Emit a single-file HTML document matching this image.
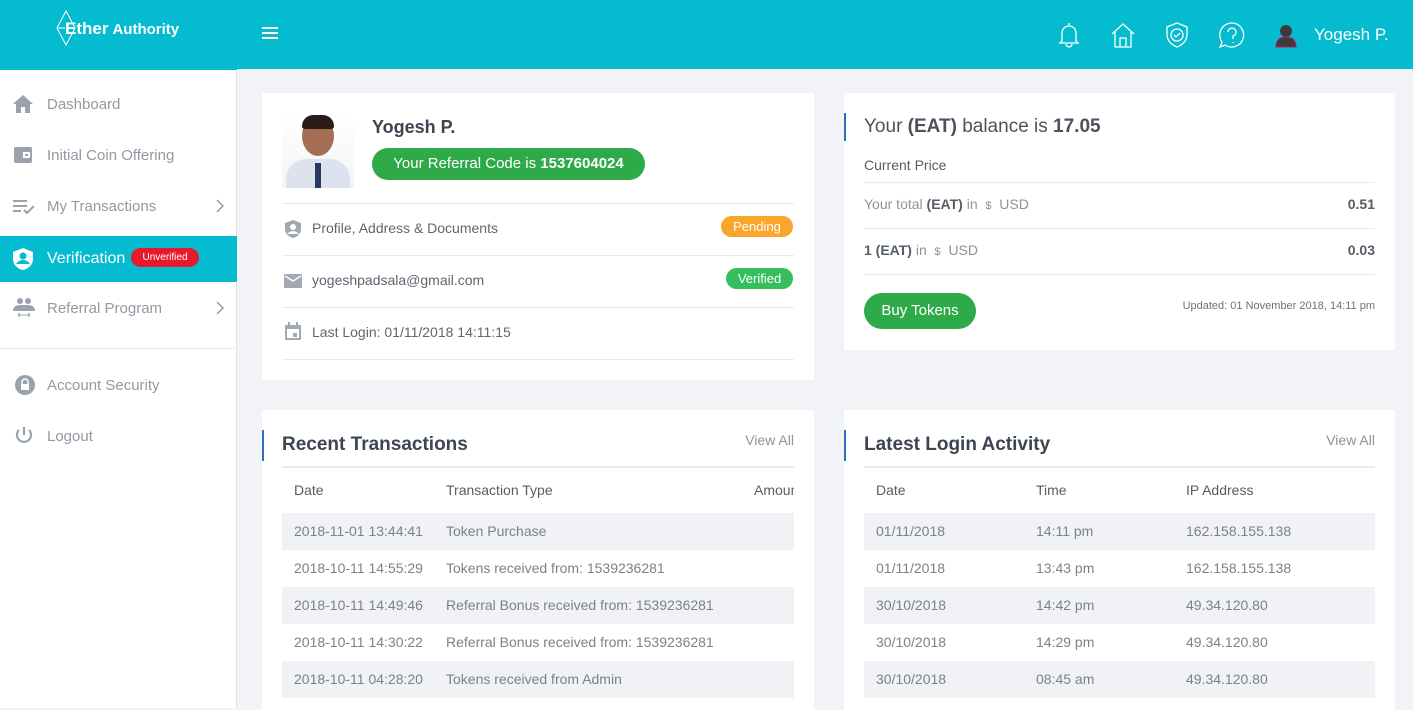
<!DOCTYPE html>
<html><head><meta charset="utf-8"><style>
*{box-sizing:border-box;margin:0;padding:0}
body{width:1413px;height:708px;overflow:hidden;background:#f1f3f7;font-family:"Liberation Sans",sans-serif;position:relative;color:#5f6670}
.abs{position:absolute}
.side{left:0;top:0;width:237px;height:708px;background:#fff;border-right:1px solid #e2e4e8}
.logo{left:0;top:0;width:237px;height:70px;background:#05bbd0}
.hdr{left:237px;top:0;right:0;height:69px;background:#05bbd0}
.nav{position:absolute;left:0;width:237px;height:46px;display:flex;align-items:center;font-size:15px;color:#9299a2}
.nav svg{position:absolute;left:12px}
.nav span{position:absolute;left:47px}
.nav svg.chev{left:216px}
.card{background:#fff;position:absolute}
.row{position:absolute;left:20px;right:20px;border-bottom:1px solid #e8eaee}
.t{position:absolute;white-space:nowrap}
.stripe{position:absolute;background:#f0f2f5;height:37px}
</style></head><body>
<div class="abs side"></div>
<div class="abs logo">
 <svg class="abs" style="left:55px;top:10px" width="22" height="36" viewBox="0 0 22 36"><path d="M11 1 L20 18 L11 35 L2 18 Z" fill="none" stroke="#fff" stroke-width="1"/><path d="M3 18 H10" stroke="#fff"/></svg>
 <div class="t" style="left:65px;top:19px;color:#fff;font-size:17px;font-weight:bold">Ether<span style="font-size:15px;margin-left:4px">Authority</span></div>
</div>
<div class="abs hdr">
 <div class="abs" style="left:25px;top:27px;width:16px;height:2px;background:#fff;box-shadow:0 5px 0 #fff,0 10px 0 #fff"></div>
 <svg class="abs" style="left:820px;top:21px" width="24" height="28" viewBox="0 0 24 28" fill="none" stroke="#fff" stroke-width="1.3"><path d="M12 2v2M5 20V12a7 7 0 0 1 14 0v8l2 2H3z M9 23a3 3 0 0 0 6 0"/></svg>
 <svg class="abs" style="left:873px;top:21px" width="26" height="28" viewBox="0 0 26 28" fill="none" stroke="#fff" stroke-width="1.3"><path d="M2 13 L13 3 L24 13 M5 11v15h16V11 M10 26v-9h6v9"/></svg>
 <svg class="abs" style="left:928px;top:21px" width="24" height="28" viewBox="0 0 24 28" fill="none" stroke="#fff" stroke-width="1.3"><path d="M12 2 L22 6 V13 C22 20 17 24 12 26 C7 24 2 20 2 13 V6 Z"/><circle cx="12" cy="14" r="6"/><path d="M9 14l2 2 4-4"/></svg>
 <svg class="abs" style="left:981px;top:21px" width="28" height="28" viewBox="0 0 28 28" fill="none" stroke="#fff" stroke-width="1.3"><path d="M14 2a12 12 0 1 1-7 22l-5 2 2-5A12 12 0 0 1 14 2z"/><path d="M10 11a4 4 0 1 1 5 4v3M15 21v1"/></svg>
 <svg class="abs" style="left:1038px;top:24px" width="22" height="24" viewBox="0 0 22 24"><circle cx="11" cy="7" r="6" fill="#3b3b3b"/><path d="M1 23c0-7 4-10 10-10s10 3 10 10z" fill="#3b3b3b" stroke="#c2185b" stroke-width="1"/></svg>
 <div class="t" style="left:1077px;top:25px;color:#fff;font-size:17px">Yogesh P.</div>
</div>

<div class="nav" style="top:81px"><svg width="22" height="20" viewBox="0 0 22 20"><path d="M11 1L1 10h3v9h5v-6h4v6h5v-9h3z" fill="#9aa3ad"/></svg><span>Dashboard</span></div>
<div class="nav" style="top:132px"><svg width="22" height="20" viewBox="0 0 22 20"><rect x="2" y="2" width="18" height="16" rx="2" fill="#9aa3ad"/><rect x="11" y="7" width="7" height="6" fill="#fff"/><rect x="13" y="9" width="3" height="2" fill="#9aa3ad"/></svg><span>Initial Coin Offering</span></div>
<div class="nav" style="top:183px"><svg width="24" height="20" viewBox="0 0 24 20" fill="none" stroke="#9aa3ad" stroke-width="2"><path d="M1 5h14M1 10h14M1 15h8M12 14l3 3 7-7"/></svg><span>My Transactions</span><svg class="chev" width="8" height="14" viewBox="0 0 8 14"><path d="M1 1l6 6-6 6" stroke="#8a9098" stroke-width="1.3" fill="none"/></svg></div>
<div class="nav" style="top:236px;background:#05bbd0;color:#fff;font-size:16px"><svg width="22" height="24" viewBox="0 0 22 24"><path d="M11 1L21 5v7c0 6-5 10-10 11C6 22 1 18 1 12V5z" fill="#fff"/><circle cx="11" cy="9" r="3.5" fill="#05bbd0"/><path d="M4 17c2-3 4-4 7-4s5 1 7 4" fill="#05bbd0"/></svg><span>Verification</span><div class="abs" style="left:131px;top:12px;width:68px;height:19px;border-radius:10px;background:#e8192c;color:#fff;font-size:10px;text-align:center;line-height:19px">Unverified</div></div>
<div class="nav" style="top:285px"><svg width="24" height="22" viewBox="0 0 24 22" fill="#9aa3ad"><circle cx="8" cy="4" r="3"/><circle cx="16" cy="4" r="3"/><path d="M1 14c0-4 3-6 7-6h8c4 0 7 2 7 6z"/><path d="M6 18h12M6 18l2-2M6 18l2 2M18 18l-2-2M18 18l-2 2" stroke="#9aa3ad" fill="none"/></svg><span>Referral Program</span><svg class="chev" width="8" height="14" viewBox="0 0 8 14"><path d="M1 1l6 6-6 6" stroke="#8a9098" stroke-width="1.3" fill="none"/></svg></div>
<div class="abs" style="left:0;top:348px;width:237px;height:1px;background:#e8eaee"></div>
<div class="nav" style="top:362px"><svg width="24" height="24" viewBox="0 0 24 24"><circle cx="13" cy="12" r="10" fill="#9aa3ad"/><rect x="9" y="11" width="8" height="6" fill="#fff"/><path d="M10 11V9a3 3 0 0 1 6 0v2" stroke="#fff" fill="none" stroke-width="1.5"/></svg><span>Account Security</span></div>
<div class="nav" style="top:413px"><svg width="24" height="24" viewBox="0 0 24 24" fill="none" stroke="#9aa3ad" stroke-width="2.2"><path d="M12 3v8M7 6a7 7 0 1 0 10 0"/></svg><span>Logout</span></div>

<!-- Profile card -->
<div class="card" style="left:262px;top:93px;width:552px;height:287px">
 <div class="abs" style="left:20px;top:20px;width:72px;height:75px;background:linear-gradient(#fff 0,#f4f4f4 100%)">
  <div class="abs" style="left:20px;top:3px;width:32px;height:40px;border-radius:50%;background:#a56f55"></div>
  <div class="abs" style="left:20px;top:2px;width:32px;height:14px;border-radius:16px 16px 4px 4px;background:#2a1d18"></div>
  <div class="abs" style="left:4px;top:46px;width:64px;height:29px;border-radius:20px 20px 0 0;background:#dde3ee"></div>
  <div class="abs" style="left:33px;top:50px;width:6px;height:25px;background:#26395e"></div>
 </div>
 <div class="t" style="left:110px;top:24px;font-size:18px;font-weight:bold;color:#3c4550">Yogesh P.</div>
 <div class="abs" style="left:110px;top:55px;width:273px;height:32px;border-radius:16px;background:#2eaa48;color:#fff;font-size:15px;text-align:center;line-height:32px">Your Referral Code is <b>1537604024</b></div>
 <div class="row" style="top:0;height:111px"></div>
 <div class="row" style="top:111px;height:52px"></div>
 <div class="row" style="top:163px;height:52px"></div>
 <div class="row" style="top:215px;height:52px"></div>
 <svg class="abs" style="left:22px;top:126px" width="18" height="20" viewBox="0 0 18 20"><path d="M9 1l8 3v6c0 5-4 8-8 9-4-1-8-4-8-9V4z" fill="#a1a8b1"/><circle cx="9" cy="8" r="3" fill="#fff"/><path d="M3 15c2-2 4-3 6-3s4 1 6 3" fill="#fff"/></svg>
 <div class="t" style="left:50px;top:127px;font-size:14px">Profile, Address &amp; Documents</div>
 <div class="abs" style="left:459px;top:123px;width:72px;height:21px;border-radius:11px;background:#f9a62a;color:#fff;font-size:13px;text-align:center;line-height:21px">Pending</div>
 <svg class="abs" style="left:22px;top:180px" width="18" height="16" viewBox="0 0 18 16"><rect x="0" y="1" width="18" height="14" rx="1" fill="#a1a8b1"/><path d="M1 3l8 5 8-5" stroke="#fff" stroke-width="1.5" fill="none"/></svg>
 <div class="t" style="left:50px;top:179px;font-size:14px">yogeshpadsala@gmail.com</div>
 <div class="abs" style="left:464px;top:175px;width:67px;height:21px;border-radius:11px;background:#35bf5c;color:#fff;font-size:13px;text-align:center;line-height:21px">Verified</div>
 <svg class="abs" style="left:22px;top:229px" width="18" height="19" viewBox="0 0 18 19"><rect x="1" y="3" width="16" height="15" rx="1" fill="#a1a8b1"/><rect x="3" y="7" width="12" height="9" fill="#fff"/><rect x="9" y="11" width="4" height="4" fill="#a1a8b1"/><rect x="4" y="0" width="2" height="4" fill="#a1a8b1"/><rect x="12" y="0" width="2" height="4" fill="#a1a8b1"/></svg>
 <div class="t" style="left:50px;top:231px;font-size:14px">Last Login: 01/11/2018 14:11:15</div>
</div>

<!-- Balance card -->
<div class="card" style="left:844px;top:93px;width:551px;height:257px">
 <div class="abs" style="left:0;top:20px;width:2px;height:28px;background:#2f6fbe"></div>
 <div class="t" style="left:20px;top:23px;font-size:19px;color:#4a525c">Your <b>(EAT)</b> balance is <b>17.05</b></div>
 <div class="t" style="left:20px;top:64px;font-size:14px;color:#555d66">Current Price</div>
 <div class="abs" style="left:20px;right:20px;top:89px;height:1px;background:#e8eaee"></div>
 <div class="t" style="left:20px;top:103px;font-size:14px;color:#8c939b">Your total <b style="color:#555d66">(EAT)</b> in &nbsp;<span style="font-size:11px">$</span>&nbsp; USD</div>
 <div class="t" style="right:20px;top:103px;font-size:14px;font-weight:bold;color:#555d66">0.51</div>
 <div class="abs" style="left:20px;right:20px;top:135px;height:1px;background:#e8eaee"></div>
 <div class="t" style="left:20px;top:149px;font-size:14px;color:#8c939b"><b style="color:#555d66">1 (EAT)</b> in &nbsp;<span style="font-size:11px">$</span>&nbsp; USD</div>
 <div class="t" style="right:20px;top:149px;font-size:14px;font-weight:bold;color:#555d66">0.03</div>
 <div class="abs" style="left:20px;right:20px;top:181px;height:1px;background:#e8eaee"></div>
 <div class="abs" style="left:20px;top:200px;width:112px;height:36px;border-radius:18px;background:#2eaa48;color:#fff;font-size:15px;text-align:center;line-height:36px">Buy Tokens</div>
 <div class="t" style="right:20px;top:207px;font-size:11px;color:#6b727a">Updated: 01 November 2018, 14:11 pm</div>
</div>

<!-- Recent tx -->
<div class="card" style="left:262px;top:410px;width:552px;height:300px;overflow:hidden">
 <div class="abs" style="left:0;top:20px;width:2px;height:31px;background:#2f6fbe"></div>
 <div class="t" style="left:20px;top:24px;font-size:19px;font-weight:bold;color:#3c4550">Recent Transactions</div>
 <div class="t" style="right:20px;top:22px;font-size:14px;color:#8c939b">View All</div>
 <div class="abs" style="left:20px;right:20px;top:56px;height:2px;background:#e8eaee"></div>
 <div class="t" style="left:32px;top:72px;font-size:14px;color:#555d66">Date</div>
 <div class="t" style="left:184px;top:72px;font-size:14px;color:#555d66">Transaction Type</div>
 <div class="abs" style="left:492px;top:72px;width:40px;overflow:hidden;font-size:14px;color:#555d66;white-space:nowrap">Amount</div>
 <div class="stripe" style="left:20px;width:512px;top:103px"></div>
 <div class="stripe" style="left:20px;width:512px;top:177px"></div>
 <div class="stripe" style="left:20px;width:512px;top:251px"></div>
 <div style="font-size:14px;color:#7b828a">
 <div class="t" style="left:32px;top:113px">2018-11-01 13:44:41</div><div class="t" style="left:184px;top:113px">Token Purchase</div>
 <div class="t" style="left:32px;top:150px">2018-10-11 14:55:29</div><div class="t" style="left:184px;top:150px">Tokens received from: 1539236281</div>
 <div class="t" style="left:32px;top:187px">2018-10-11 14:49:46</div><div class="t" style="left:184px;top:187px">Referral Bonus received from: 1539236281</div>
 <div class="t" style="left:32px;top:224px">2018-10-11 14:30:22</div><div class="t" style="left:184px;top:224px">Referral Bonus received from: 1539236281</div>
 <div class="t" style="left:32px;top:261px">2018-10-11 04:28:20</div><div class="t" style="left:184px;top:261px">Tokens received from Admin</div>
 </div>
</div>

<!-- Login activity -->
<div class="card" style="left:844px;top:410px;width:551px;height:300px">
 <div class="abs" style="left:0;top:20px;width:2px;height:31px;background:#2f6fbe"></div>
 <div class="t" style="left:20px;top:24px;font-size:19px;font-weight:bold;color:#3c4550">Latest Login Activity</div>
 <div class="t" style="right:20px;top:22px;font-size:14px;color:#8c939b">View All</div>
 <div class="abs" style="left:20px;right:20px;top:56px;height:2px;background:#e8eaee"></div>
 <div class="t" style="left:32px;top:72px;font-size:14px;color:#555d66">Date</div>
 <div class="t" style="left:192px;top:72px;font-size:14px;color:#555d66">Time</div>
 <div class="t" style="left:342px;top:72px;font-size:14px;color:#555d66">IP Address</div>
 <div class="stripe" style="left:20px;width:511px;top:103px"></div>
 <div class="stripe" style="left:20px;width:511px;top:177px"></div>
 <div class="stripe" style="left:20px;width:511px;top:251px"></div>
 <div style="font-size:14px;color:#7b828a">
 <div class="t" style="left:32px;top:113px">01/11/2018</div><div class="t" style="left:192px;top:113px">14:11 pm</div><div class="t" style="left:342px;top:113px">162.158.155.138</div>
 <div class="t" style="left:32px;top:150px">01/11/2018</div><div class="t" style="left:192px;top:150px">13:43 pm</div><div class="t" style="left:342px;top:150px">162.158.155.138</div>
 <div class="t" style="left:32px;top:187px">30/10/2018</div><div class="t" style="left:192px;top:187px">14:42 pm</div><div class="t" style="left:342px;top:187px">49.34.120.80</div>
 <div class="t" style="left:32px;top:224px">30/10/2018</div><div class="t" style="left:192px;top:224px">14:29 pm</div><div class="t" style="left:342px;top:224px">49.34.120.80</div>
 <div class="t" style="left:32px;top:261px">30/10/2018</div><div class="t" style="left:192px;top:261px">08:45 am</div><div class="t" style="left:342px;top:261px">49.34.120.80</div>
 </div>
</div>
</body></html>
